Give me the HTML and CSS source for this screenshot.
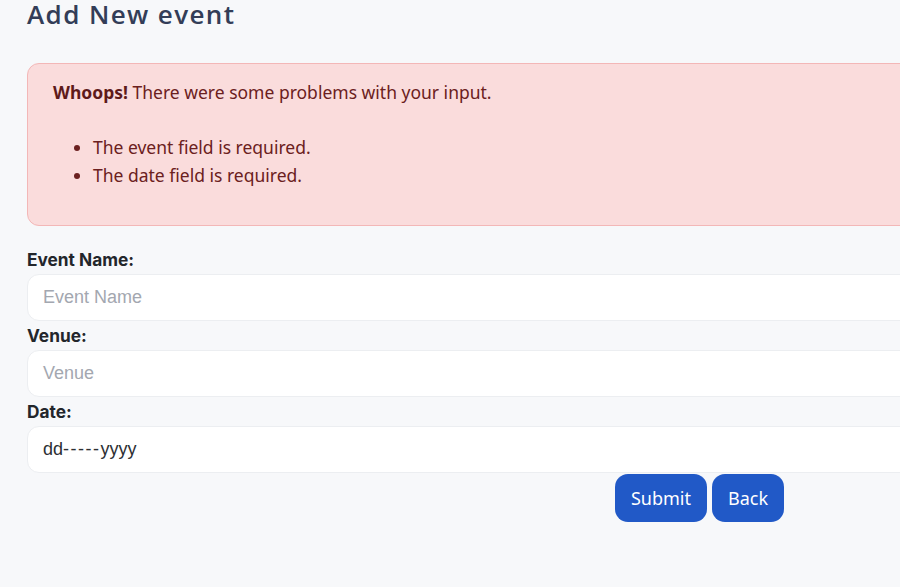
FILE: index.html
```html
<!DOCTYPE html>
<html>
<head>
<meta charset="utf-8">
<link rel="stylesheet" href="styles.css">
</head>
<body>
<div class="page">
  <h1 class="title">Add New event</h1>
  <div class="alert">
    <p class="alert-head"><strong>Whoops!</strong> There were some problems with your input.</p>
    <ul class="alert-list">
      <li>The event field is required.</li>
      <li>The date field is required.</li>
    </ul>
  </div>
  <form class="form">
    <label class="label">Event Name:</label>
    <div class="input placeholder">Event Name</div>
    <label class="label">Venue:</label>
    <div class="input placeholder">Venue</div>
    <label class="label">Date:</label>
    <div class="input value">dd<span class="dashes">-----</span>yyyy</div>
    <div class="actions">
      <button type="button" class="btn">Submit</button>
      <button type="button" class="btn">Back</button>
    </div>
  </form>
</div>
</body>
</html>
```

FILE: styles.css
```css
html, body {
  margin: 0;
  padding: 0;
  background: #f7f8fa;
  overflow: hidden;
  width: 900px;
  height: 587px;
}
.page {
  width: 1345px;
  padding: 0 0 0 27px;
}
.title {
  margin: 0;
  font-family: "Open Sans", "Noto Sans", sans-serif;
  font-weight: 600;
  font-size: 26px;
  line-height: 28px;
  color: #333d57;
  letter-spacing: 1.4px;
  height: 28px;
}
.alert {
  margin-top: 35px;
  background: #fadcdc;
  border: 1px solid #f3b7b7;
  border-radius: 12px;
  padding: 14px 25px 25px 25px;
  height: 122px;
  color: #6b2020;
  font-family: "Noto Sans", "Open Sans", sans-serif;
  font-size: 17.5px;
  line-height: 28px;
}
.alert-head {
  margin: 0;
}
.alert-head strong {
  font-weight: 700;
  color: #5e1a1a;
}
.alert-list {
  margin: 27px 0 0 0;
  padding-left: 40px;
}
.alert-list li {
  line-height: 28px;
}
.form {
  margin-top: 22px;
  display: flex;
  flex-direction: column;
}
.label {
  font-family: Inter, "Liberation Sans", Arial, sans-serif;
  font-weight: 700;
  font-size: 17.3px;
  line-height: 22px;
  color: #23262b;
  height: 25px;
  padding-top: 2px;
  display: block;
  margin-top: -1px;
}
.input {
  box-sizing: border-box;
  height: 47px;
  background: #fff;
  border: 1px solid #eceef1;
  border-radius: 12px;
  padding: 0 15px;
  display: flex;
  align-items: center;
  font-family: "Liberation Sans", Arial, sans-serif;
  font-size: 18px;
  margin-bottom: 3px;
}
.placeholder {
  color: #a3a7b0;
}
.value {
  color: #2d2f33;
}
.dashes {
  letter-spacing: 1.5px;
}
.actions {
  display: flex;
  justify-content: center;
  gap: 5px;
  margin-top: -2px;
}
.btn {
  background: #2159c7;
  color: #fff;
  border: none;
  border-radius: 13px;
  height: 48px;
  padding: 0 16px;
  font-family: "Noto Sans", "Open Sans", sans-serif;
  font-size: 18px;
}
```
